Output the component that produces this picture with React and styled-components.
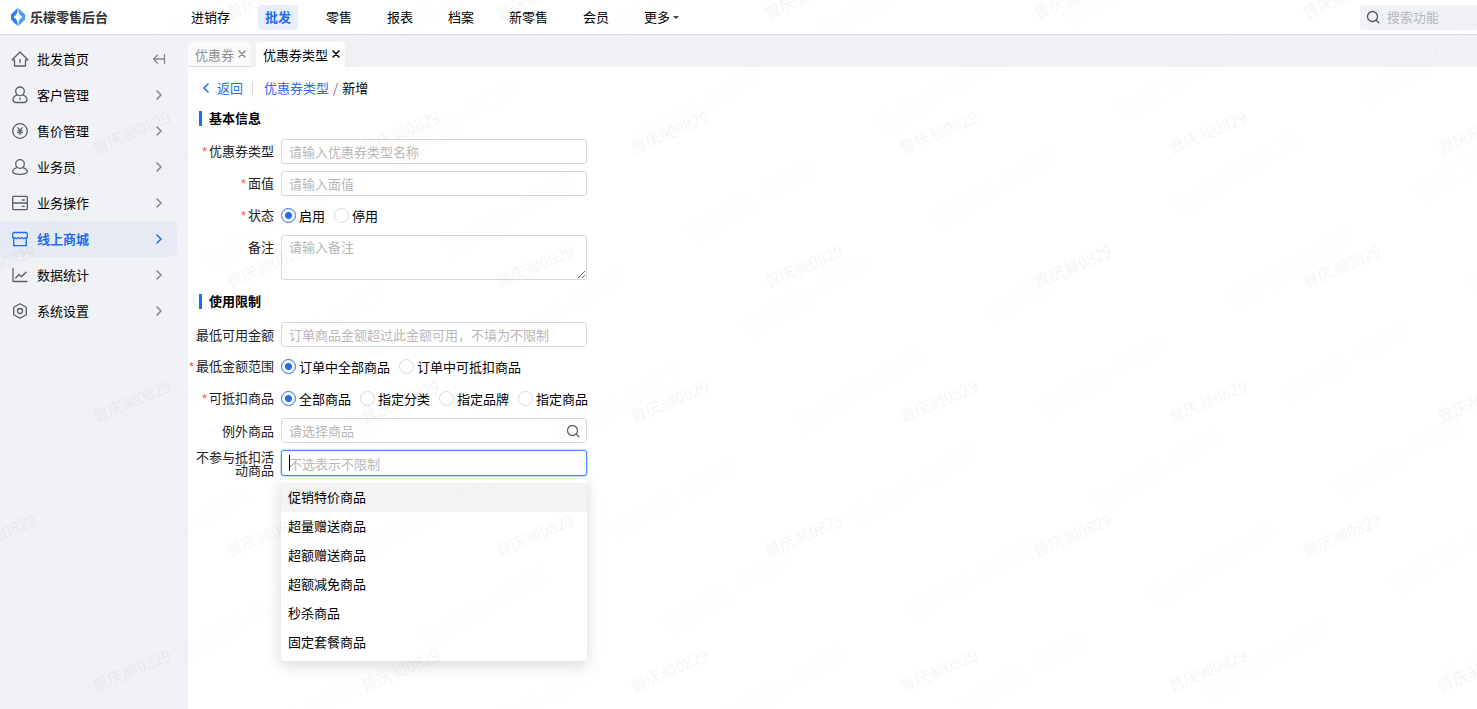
import React from 'react';
import styled, { createGlobalStyle, css } from 'styled-components';

const BLUE = '#1f6cf5';

const GlobalStyle = createGlobalStyle`
  * { box-sizing: border-box; }
  body {
    margin: 0;
    background: #f0f2f5;
    color: #000;
    font: 13px/20px "Noto Sans CJK SC", "Liberation Sans", sans-serif;
  }
  button, input, textarea { font: inherit; color: inherit; }
  button { border: 0; padding: 0; background: none; cursor: pointer; }
  a { color: inherit; text-decoration: none; }
  ul { list-style: none; margin: 0; padding: 0; }
`;

const Page = styled.div`
  display: flex;
  flex-direction: column;
  min-height: 100vh;
  overflow: hidden;
`;

const Header = styled.header`
  display: flex;
  align-items: center;
  height: 35px;
  background: #fff;
  border-bottom: 1px solid #d9dbde;
`;

const Brand = styled.a`
  display: flex;
  align-items: center;
  gap: 4px;
  width: 184px;
  padding-left: 10px;
  font-weight: 700;
  color: #333;
`;

const Nav = styled.nav`
  display: flex;
  flex: 1;
  gap: 21px;
`;

const NavLink = styled.a`
  display: flex;
  align-items: center;
  height: 25px;
  padding: 0 7px;
  border-radius: 4px;
  ${p => p.$active && css`
    background: #e8eefc;
    color: ${BLUE};
    font-weight: 700;
  `}
`;

const Caret = styled.span`
  margin-left: 3px;
  border: 3px solid transparent;
  border-top-color: #444;
  border-bottom: 0;
`;

const Search = styled.label`
  display: flex;
  align-items: center;
  gap: 7px;
  width: 117px;
  height: 25px;
  padding-left: 6px;
  border-radius: 3px 0 0 3px;
  background: #f0f2f5;
  color: #555;
`;

const SearchInput = styled.input`
  flex: 1;
  min-width: 0;
  border: 0;
  padding: 0;
  outline: 0;
  background: none;
  &::placeholder { color: #b5b7ba; opacity: 1; }
`;

const Body = styled.div`
  display: flex;
  flex: 1;
`;

const Sidebar = styled.aside`
  flex: none;
  width: 188px;
  padding: 6px 11px 0 0;
`;

const SideRow = styled.li`
  display: flex;
  align-items: center;
  height: 36px;
  padding: 0 11px;
  border-radius: 0 6px 6px 0;
  color: ${p => (p.$active ? BLUE : '#000')};
  font-weight: ${p => (p.$active ? 700 : 400)};
  background: ${p => (p.$active ? '#e6eaf5' : 'none')};
`;

const SideLink = styled.a`
  display: flex;
  flex: 1;
  align-items: center;
  gap: 8px;
  svg { color: ${p => (p.$active ? BLUE : '#5a5d69')}; }
`;

const IconButton = styled.button`
  display: flex;
  color: ${p => (p.$active ? BLUE : '#888')};
`;

const CloseButton = styled.button`
  display: flex;
  color: inherit;
`;

const Main = styled.main`
  display: flex;
  flex: 1;
  flex-direction: column;
  min-width: 0;
`;

const Tabs = styled.div`
  display: flex;
  gap: 5px;
  height: 32px;
  padding-top: 7px;
`;

const Tab = styled.div`
  display: flex;
  align-items: center;
  gap: 3px;
  padding: 2px 4px 0 7px;
  border-radius: 4px 4px 0 0;
  background: ${p => (p.$active ? '#fff' : '#fafafa')};
  color: ${p => (p.$active ? '#000' : '#909090')};
  border-bottom: 1px solid ${p => (p.$active ? '#fff' : '#d9dbde')};
`;

const Content = styled.section`
  flex: 1;
  padding: 11px 0 40px;
  background: #fff;
`;

const Crumbs = styled.nav`
  display: flex;
  align-items: center;
  padding-left: 11px;
  height: 20px;
`;

const CrumbLink = styled.a`
  display: flex;
  align-items: center;
  gap: 4px;
  color: ${BLUE};
`;

const CrumbRule = styled.span`
  width: 1px;
  height: 12px;
  margin: 0 11px 0 9px;
  background: #ddd;
`;

const Slash = styled.span`
  padding: 0 4px;
  color: #777;
`;

const SectionTitle = styled.h2`
  display: flex;
  align-items: center;
  gap: 7px;
  height: 20px;
  margin: ${p => (p.$first ? '10px' : '11px')} 0 11px 11px;
  font-size: 13px;
  font-weight: 700;
  &::before {
    content: "";
    width: 3px;
    height: 15px;
    background: ${BLUE};
  }
`;

const Form = styled.form`
  max-width: 399px;
`;

const Rows = styled.div`
  display: flex;
  flex-direction: column;
  gap: 7px;
`;

const Row = styled.div`
  display: grid;
  grid-template-columns: 86px 306px;
  column-gap: 7px;
  align-items: ${p => (p.$top ? 'start' : 'center')};
  min-height: 25px;
`;

const Label = styled.label`
  color: #222;
  text-align: right;
  white-space: nowrap;
  line-height: ${p => (p.$twoLine ? '13px' : '24px')};
`;

const Star = styled.span`
  margin-right: 2px;
  color: #ff4d4f;
  font-family: "Liberation Sans", sans-serif;
`;

const fieldStyle = css`
  display: block;
  width: 100%;
  border: 1px solid #d9d9d9;
  border-radius: 3px;
  padding: 0 7px;
  outline: 0;
  background: #fff;
  &::placeholder { color: #b8b8b8; opacity: 1; }
`;

const Field = styled.input`
  ${fieldStyle}
  height: 25px;
`;

const Area = styled.textarea`
  ${fieldStyle}
  height: 45px;
  padding-top: 1px;
  resize: vertical;
`;

const FieldBox = styled.div`
  display: grid;
  align-items: center;
  > * { grid-area: 1 / 1; }
  > svg { justify-self: end; margin-right: 7px; color: #666; }
`;

const Combo = styled.div`
  position: relative;
`;

const ComboInput = styled.input`
  ${fieldStyle}
  height: 26px;
  border-color: #4a8af8;
  box-shadow: 0 0 0 1px #cfe0fd;
`;

const TextCursor = styled.span`
  position: absolute;
  top: 5px;
  left: 8px;
  width: 1px;
  height: 16px;
  background: #000;
`;

const Menu = styled.ul`
  position: absolute;
  top: 29px;
  left: 0;
  width: 100%;
  padding: 4px 0;
  border-radius: 3px;
  background: #fff;
  box-shadow: 0 4px 16px rgba(0, 0, 0, .16);
`;

const Option = styled.li`
  padding: 4px 7px 5px;
  background: ${p => (p.$active ? '#f4f4f4' : 'none')};
`;

const RadioGroup = styled.div`
  display: flex;
  gap: 9px;
`;

const RadioLabel = styled.label`
  display: flex;
  align-items: center;
  gap: 3px;
  white-space: nowrap;
`;

const Radio = styled.input`
  flex: none;
  appearance: none;
  width: 15px;
  height: 15px;
  margin: 0;
  border: 1px solid #d9d9d9;
  border-radius: 50%;
  background: #fff;
  &:checked {
    border-color: ${BLUE};
    background: radial-gradient(circle, ${BLUE} 3px, #fff 4px);
  }
`;

const WatermarkLayer = styled.svg`
  position: fixed;
  inset: 0;
  width: 100%;
  height: 100%;
  pointer-events: none;
`;

const Icon = ({ size = 18, box = 18, children }) => (
  <svg width={size} height={size} viewBox={`0 0 ${box} ${box}`} fill="none" stroke="currentColor"
    strokeWidth="1.3" strokeLinecap="round" strokeLinejoin="round" aria-hidden="true">{children}</svg>
);

const icons = {
  home: <><path d="M1.2 9.8 9 2l7.800 7.800H14.500v6.200h-11V9.800zM9 9.500v3" /></>,
  customer: <><circle cx="9" cy="5.300" r="4.300" /><path d="M6.300 8.800c-2.600 1-4.300 2.600-4.300 4.800 0 2.200 1.200 2.900 2.800 2.900h8.400c1.600 0 2.800-.7 2.800-2.900 0-2.200-1.700-3.800-4.300-4.800M9 12v1.500" /></>,
  price: <><circle cx="9" cy="9" r="7.300" /><path d="m6.800 5.700 2.200 2.600 2.200-2.600M9 8.300v4.200M6.700 8.800h4.600M6.700 10.700h4.600" /></>,
  clerk: <><circle cx="9" cy="6" r="4.300" /><path d="M6.200 9.500C3.400 10.300 1.700 12 1.700 13.600c0 1.800 3.300 2.700 7.300 2.700s7.300-.9 7.300-2.700c0-1.600-1.700-3.300-4.500-4.100" /></>,
  ops: <><rect x="1.700" y="2.300" width="14.600" height="13.400" rx="1" /><path d="M1.700 9h14.600M11.300 6h2M11.300 12.400h2" /></>,
  shop: <><path d="M2.700 2.500h12.600l1 1v4.200h-2.100l-1.600 1-1.800-1.200-1.800 1.200-1.800-1.200-1.800 1.200-1.600-1H1.700V3.500zM2.700 8v7.700h12.600V8" /></>,
  chart: <path d="M2 2.500v13h14M4.700 12 8 8.500l2.300 2.200L15 6.200" />,
  settings: <><path d="M9 1.700l6.300 3.600v7.400L9 16.300l-6.300-3.600V5.300z" /><circle cx="9" cy="9" r="2.500" /></>,
};

const Chevron = ({ left }) => (
  <Icon size={14} box={14}><path strokeWidth="1.600" d={left ? 'M9 3 5 7l4 4' : 'm5 3 4 4-4 4'} /></Icon>
);
const Magnifier = () => (
  <Icon size={14} box={14}><circle cx="6.500" cy="6.500" r="5" /><path d="m10.200 10.200 2.600 2.600" /></Icon>
);
const Cross = () => (
  <Icon size={10} box={10}><path strokeWidth="1.500" d="m2 1 6 6M8 1 2 7" /></Icon>
);

const sideItems = [
  ['home', '批发首页'],
  ['customer', '客户管理'],
  ['price', '售价管理'],
  ['clerk', '业务员'],
  ['ops', '业务操作'],
  ['shop', '线上商城'],
  ['chart', '数据统计'],
  ['settings', '系统设置'],
];
const navItems = ['进销存', '批发', '零售', '报表', '档案', '新零售', '会员'];
const options = ['促销特价商品', '超量赠送商品', '超额赠送商品', '超额减免商品', '秒杀商品', '固定套餐商品'];

function Required() {
  return <Star aria-hidden="true">*</Star>;
}

function Radios({ name, items, label }) {
  return (
    <RadioGroup role="radiogroup" aria-label={label}>
      {items.map((item, i) => (
        <RadioLabel key={item}>
          <Radio type="radio" name={name} value={item} defaultChecked={i === 0} />
          {item}
        </RadioLabel>
      ))}
    </RadioGroup>
  );
}

function Watermark() {
  return (
    <WatermarkLayer aria-hidden="true">
      <defs>
        <pattern id="mark" width="269" height="269" patternUnits="userSpaceOnUse" x="-3" y="-2">
          <g fill="#000" fillOpacity=".04" fontSize="16" textAnchor="middle">
            <text transform="translate(137 140) rotate(-23)">曾庆昶0829</text>
            <text transform="translate(2 5) rotate(-23)">曾庆昶0829</text>
            <text transform="translate(271 5) rotate(-23)">曾庆昶0829</text>
            <text transform="translate(2 274) rotate(-23)">曾庆昶0829</text>
            <text transform="translate(271 274) rotate(-23)">曾庆昶0829</text>
          </g>
        </pattern>
        <pattern id="markFaint" width="217" height="109" patternUnits="userSpaceOnUse"
          patternTransform="translate(601 523) rotate(-30)">
          <text x="0" y="24" fill="#000" fillOpacity=".006" fontSize="26">曾庆昶-0829</text>
        </pattern>
      </defs>
      <rect width="100%" height="100%" fill="url(#markFaint)" />
      <rect width="100%" height="100%" fill="url(#mark)" />
    </WatermarkLayer>
  );
}

export default function App() {
  return (
    <Page>
      <GlobalStyle />
      <Header>
        <Brand href="#">
          <svg width="16" height="18" viewBox="0 0 16 18" aria-hidden="true">
            <path fill="#2e7cf6" d="M7.500 0 1 6.500v5L7.500 18v-3.200C7 12 5.500 10 3.500 9 5.500 8 7 6 7.500 3.500z" />
            <path fill="#4b9bff" d="M8.500 0 15 6.500v5L8.500 18v-3.200C9 12 10.500 10 12.500 9 10.500 8 9 6 8.500 3.500z" />
          </svg>
          乐檬零售后台
        </Brand>
        <Nav>
          {navItems.map(item => (
            <NavLink key={item} href="#" $active={item === '批发'}>{item}</NavLink>
          ))}
          <NavLink href="#">更多<Caret /></NavLink>
        </Nav>
        <Search>
          <Magnifier />
          <SearchInput aria-label="搜索功能" placeholder="搜索功能" />
        </Search>
      </Header>
      <Body>
        <Sidebar>
          <ul>
            {sideItems.map(([icon, text]) => {
              const active = icon === 'shop';
              return (
                <SideRow key={icon} $active={active}>
                  <SideLink href="#" $active={active}><Icon>{icons[icon]}</Icon>{text}</SideLink>
                  <IconButton $active={active} aria-label={icon === 'home' ? '收起' : '展开' + text}>
                    {icon === 'home'
                      ? <Icon size={14} box={14}><path d="M12.500 2.500v9M12 7H1.500M5.500 3l-4 4 4 4" /></Icon>
                      : <Chevron />}
                  </IconButton>
                </SideRow>
              );
            })}
          </ul>
        </Sidebar>
        <Main>
          <Tabs>
            <Tab>优惠券<CloseButton aria-label="关闭优惠券"><Cross /></CloseButton></Tab>
            <Tab $active>优惠券类型<CloseButton aria-label="关闭优惠券类型"><Cross /></CloseButton></Tab>
          </Tabs>
          <Content>
            <Crumbs>
              <CrumbLink href="#"><Chevron left />返回</CrumbLink>
              <CrumbRule />
              <CrumbLink href="#">优惠券类型</CrumbLink>
              <Slash>/</Slash>
              <span>新增</span>
            </Crumbs>
            <Form>
              <SectionTitle $first>基本信息</SectionTitle>
              <Rows>
                <Row>
                  <Label htmlFor="name"><Required />优惠券类型</Label>
                  <Field id="name" placeholder="请输入优惠券类型名称" />
                </Row>
                <Row>
                  <Label htmlFor="value"><Required />面值</Label>
                  <Field id="value" placeholder="请输入面值" />
                </Row>
                <Row>
                  <Label as="span"><Required />状态</Label>
                  <Radios name="status" label="状态" items={['启用', '停用']} />
                </Row>
                <Row $top>
                  <Label htmlFor="note">备注</Label>
                  <Area id="note" placeholder="请输入备注" />
                </Row>
              </Rows>
              <SectionTitle>使用限制</SectionTitle>
              <Rows>
                <Row>
                  <Label htmlFor="min">最低可用金额</Label>
                  <Field id="min" placeholder="订单商品金额超过此金额可用，不填为不限制" />
                </Row>
                <Row>
                  <Label as="span"><Required />最低金额范围</Label>
                  <Radios name="range" label="最低金额范围" items={['订单中全部商品', '订单中可抵扣商品']} />
                </Row>
                <Row>
                  <Label as="span"><Required />可抵扣商品</Label>
                  <Radios name="goods" label="可抵扣商品" items={['全部商品', '指定分类', '指定品牌', '指定商品']} />
                </Row>
                <Row>
                  <Label htmlFor="except">例外商品</Label>
                  <FieldBox>
                    <Field id="except" placeholder="请选择商品" />
                    <Magnifier />
                  </FieldBox>
                </Row>
                <Row>
                  <Label htmlFor="activity" $twoLine>不参与抵扣活<br />动商品</Label>
                  <Combo>
                    <ComboInput id="activity" role="combobox" aria-expanded="true" aria-controls="activity-list" placeholder="不选表示不限制" />
                    <TextCursor />
                    <Menu id="activity-list" role="listbox">
                      {options.map((o, i) => (
                        <Option key={o} role="option" $active={i === 0}>{o}</Option>
                      ))}
                    </Menu>
                  </Combo>
                </Row>
              </Rows>
            </Form>
          </Content>
        </Main>
      </Body>
      <Watermark />
    </Page>
  );
}
